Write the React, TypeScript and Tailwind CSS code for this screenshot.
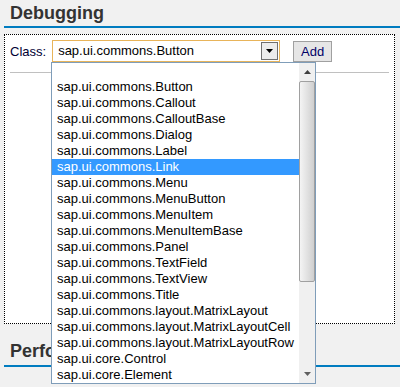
import React from "react";

const items = [
  "",
  "sap.ui.commons.Button",
  "sap.ui.commons.Callout",
  "sap.ui.commons.CalloutBase",
  "sap.ui.commons.Dialog",
  "sap.ui.commons.Label",
  "sap.ui.commons.Link",
  "sap.ui.commons.Menu",
  "sap.ui.commons.MenuButton",
  "sap.ui.commons.MenuItem",
  "sap.ui.commons.MenuItemBase",
  "sap.ui.commons.Panel",
  "sap.ui.commons.TextField",
  "sap.ui.commons.TextView",
  "sap.ui.commons.Title",
  "sap.ui.commons.layout.MatrixLayout",
  "sap.ui.commons.layout.MatrixLayoutCell",
  "sap.ui.commons.layout.MatrixLayoutRow",
  "sap.ui.core.Control",
  "sap.ui.core.Element",
];

export default function App() {
  return (
    <div
      className="relative w-[400px] h-[387px] overflow-hidden bg-[#f1f1f1]"
      style={{ fontFamily: '"Liberation Sans", Arial, sans-serif' }}
    >
      <div className="pl-[10px] pt-[2px] h-[26px] text-[18px] leading-[22px] font-bold text-[#333333]">
        Debugging
      </div>
      <div className="ml-[4px] h-[2px] bg-[#007cc0]" />
      <div className="mt-[6px] ml-[4px] w-[391px] h-[290px] border border-dotted border-black bg-white">
        <div className="flex items-start pt-[5px] pl-[5px]">
          <div className="text-[13px] leading-[16px] mt-[4px] text-[#000033]">Class:</div>
          <div className="ml-[6px] w-[228px] h-[22px] border border-[#e8b45a] bg-white flex items-center">
            <div className="flex-1 pl-[5px] text-[13px] leading-[16px] text-black">sap.ui.commons.Button</div>
            <div className="mr-[1px] w-[17px] h-[18px] border border-[#707070] bg-[#ececec] flex items-center justify-center">
              <svg width="7" height="4" viewBox="0 0 7 4">
                <path d="M0 0h7L3.5 4z" fill="#000" />
              </svg>
            </div>
          </div>
          <div className="ml-[13px] w-[39px] h-[21px] mt-[1px] border border-[#a0a0a0] bg-[#e6e6e6] flex items-center justify-center text-[13px] text-[#000066]">
            Add
          </div>
        </div>
        <div className="mt-[10px] ml-[5px] w-[379px] h-px bg-[#c0c0c0]" />
      </div>
      <div className="pl-[10px] pt-[16px] h-[41px] text-[18px] leading-[22px] font-bold text-[#333333]">
        Performance
      </div>
      <div className="ml-[4px] h-[2px] bg-[#007cc0]" />

      <div className="absolute left-[51px] top-[62px] w-[265px] h-[322px] border border-[#7f9db9] bg-white flex">
        <div className="flex-1 flex flex-col">
          {items.map((it, i) => (
            <div
              key={i}
              className={
                i === 6
                  ? "h-[16px] pl-[5px] text-[13px] leading-[16px] bg-[#3399ff] text-white"
                  : "h-[16px] pl-[5px] text-[13px] leading-[16px] text-black"
              }
            >
              {it}
            </div>
          ))}
        </div>
        <div className="w-[16px] h-full bg-[#f0f0f0] flex flex-col">
          <div className="h-[18px] flex items-center justify-center">
            <svg width="7" height="4" viewBox="0 0 7 4">
              <path d="M3.5 0L7 4H0z" fill="#404040" />
            </svg>
          </div>
          <div className="h-[201px] border border-[#a0a0a0] rounded-[2px] bg-gradient-to-r from-[#f4f4f4] via-[#e2e2e2] to-[#cfcfcf]" />
          <div className="flex-1" />
          <div className="h-[18px] flex items-center justify-center">
            <svg width="7" height="4" viewBox="0 0 7 4">
              <path d="M0 0h7L3.5 4z" fill="#606060" />
            </svg>
          </div>
        </div>
      </div>
    </div>
  );
}
